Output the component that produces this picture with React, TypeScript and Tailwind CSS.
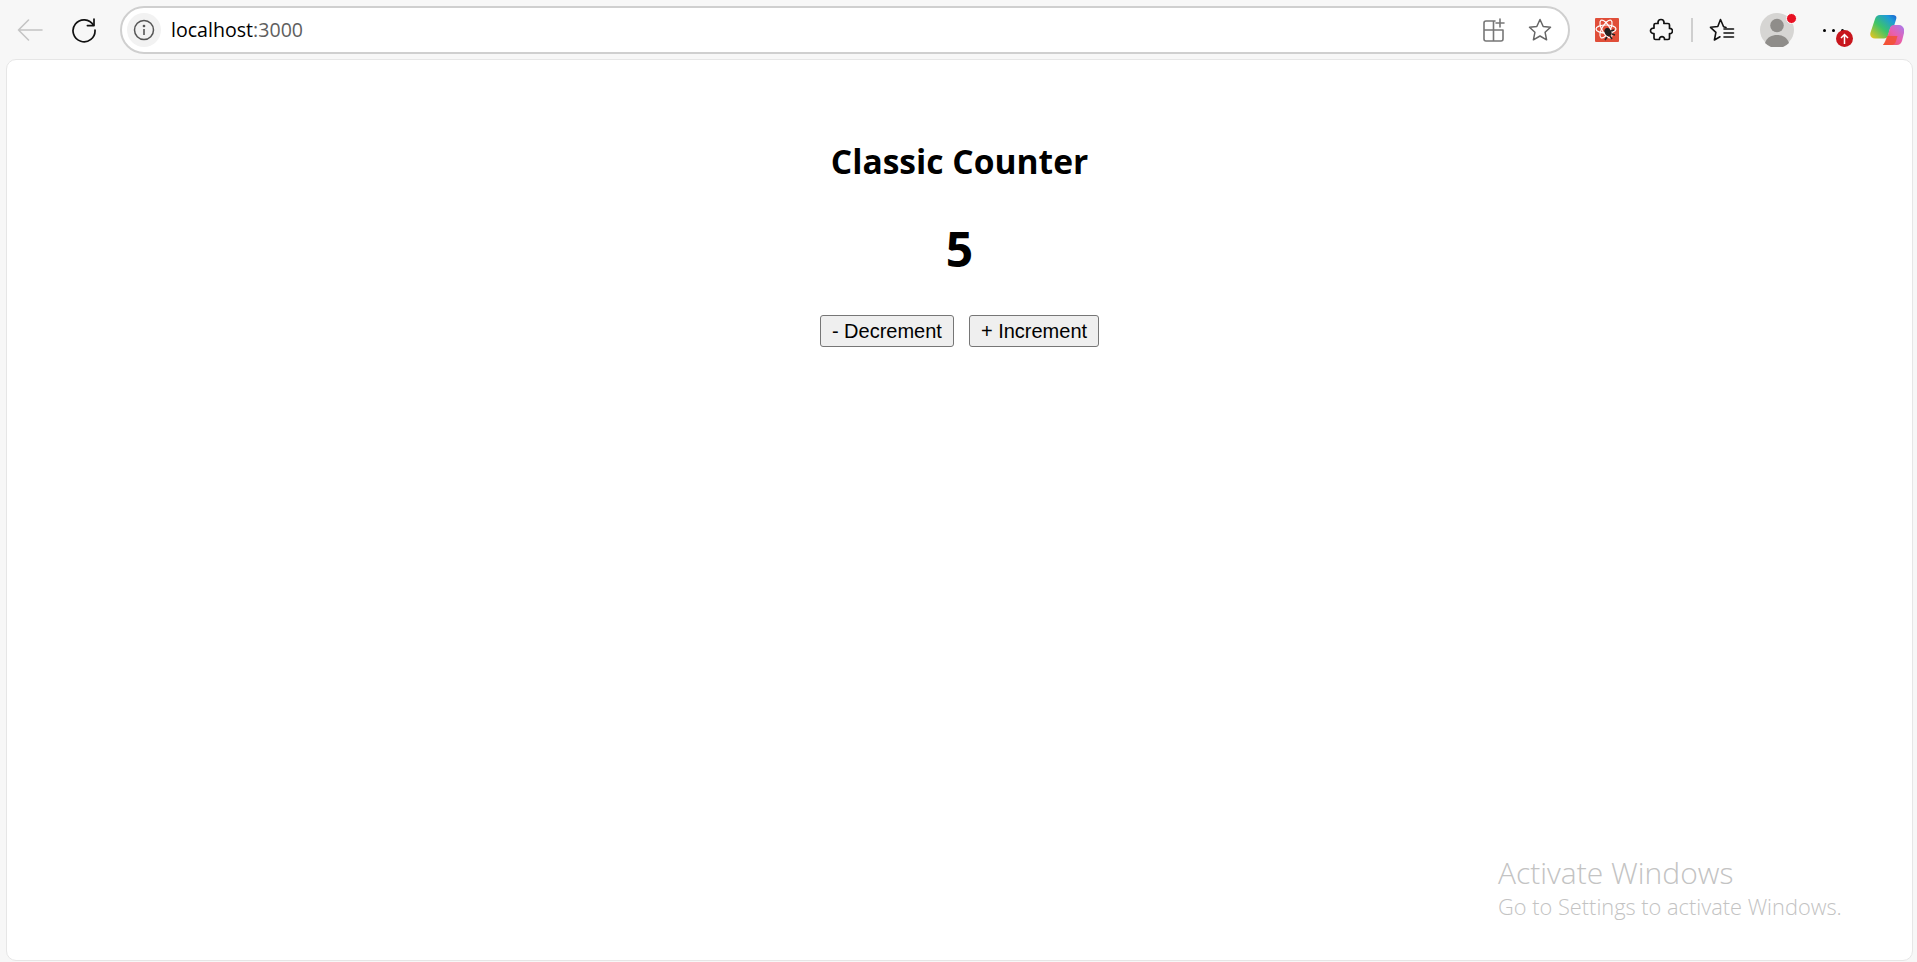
import React from "react";

const Back = () => (
  <svg width="26" height="24" viewBox="0 0 26 24" fill="none" stroke="#c4c4c4" strokeWidth="1.6" strokeLinecap="round" strokeLinejoin="round">
    <path d="M1.5 12H25M11.5 2 1.5 12l10 10" />
  </svg>
);
const Reload = () => (
  <svg width="26" height="26" viewBox="0 0 26 26" fill="none" stroke="#111" strokeWidth="1.7" strokeLinecap="round" strokeLinejoin="round">
    <path d="M22.5 8.2A11 11 0 1 0 24 13" />
    <path d="M23 2v6.6h-6.6" />
  </svg>
);
const Info = () => (
  <svg width="22" height="22" viewBox="0 0 22 22" fill="none" stroke="#555" strokeWidth="1.5">
    <circle cx="11" cy="11" r="9.5" />
    <path d="M11 10v6" strokeWidth="1.6" />
    <circle cx="11" cy="7" r="0.6" fill="#555" />
  </svg>
);
const TabPlus = () => (
  <svg width="24" height="24" viewBox="0 0 24 24" fill="none" stroke="#777" strokeWidth="1.6" strokeLinejoin="round" strokeLinecap="round">
    <path d="M13 3H4a2 2 0 0 0-2 2v16a2 2 0 0 0 2 2h15a2 2 0 0 0 2-2V12H2M11.500 3v20" />
    <path d="M18 1v8M14 5h8" />
  </svg>
);
const Star = () => (
  <svg width="26" height="26" viewBox="0 0 26 26" fill="none" stroke="#666" strokeWidth="1.5" strokeLinejoin="round">
    <path d="M13 2.500l3.200 7 7.300.8-5.400 5 1.500 7.500L13 19l-6.600 3.800 1.500-7.500-5.400-5 7.300-.8z" />
  </svg>
);
const ReactBug = () => (
  <svg width="24" height="24" viewBox="0 0 24 24" className="rounded-[1px]">
    <rect width="24" height="24" fill="#e04e39" />
    <g fill="none" stroke="#fff" strokeWidth="1.200">
      <ellipse cx="11" cy="11" rx="10" ry="4" />
      <ellipse cx="11" cy="11" rx="10" ry="4" transform="rotate(60 11 11)" />
      <ellipse cx="11" cy="11" rx="10" ry="4" transform="rotate(120 11 11)" />
    </g>
    <g stroke="#222" strokeWidth="1.500" fill="#222">
      <ellipse cx="13" cy="14" rx="2.500" ry="3.500" transform="rotate(-30 13 14)" />
      <path d="M12 19l-2 3M15 18l2 3M16 13l3-1M17 16l3 1" fill="none" />
    </g>
  </svg>
);
const Puzzle = () => (
  <svg width="24" height="24" viewBox="0 0 24 24" fill="none" stroke="#111" strokeWidth="1.700" strokeLinejoin="round">
    <path d="M9 4.500C9 2.800 10.300 1.500 12 1.500s3 1.300 3 3c0 .6-.1 1-.1 1H19a1.500 1.500 0 0 1 1.500 1.500v3.500c1.800-.3 3 1.100 3 2.500s-1.200 3-3 2.700V20a1.500 1.500 0 0 1-1.500 1.500h-3.500c.2-1.800-1.200-2.800-2.500-2.800s-2.800 1-2.500 2.800H6.500A1.500 1.500 0 0 1 5 20v-4.500c-1.800.3-3.500-1-3.500-2.700s1.700-3 3.500-2.700V7a1.500 1.500 0 0 1 1.500-1.500h2.600S9 5 9 4.500z" />
  </svg>
);
const StarList = () => (
  <svg width="26" height="26" viewBox="0 0 26 26" fill="none" stroke="#111" strokeWidth="1.600" strokeLinejoin="round" strokeLinecap="round">
    <path d="M17 10.500 14.600 9.800 11.500 2.500 8.800 9.500 1.500 10.300l5.400 5L5.400 23l5.600-3.200" />
    <path d="M15 12h9.500M15 16h9.500M15 20h9.500" />
  </svg>
);
const Avatar = () => (
  <div className="relative h-[34px] w-[34px]">
    <svg width="34" height="34" viewBox="0 0 34 34">
      <circle cx="17" cy="17" r="17" fill="#d6d5d3" />
      <circle cx="17" cy="12.500" r="6.800" fill="#8f8d8a" />
      <path d="M5 30c2-6 7-8 12-8s10 2 12 8a17 17 0 0 1-24 0z" fill="#8f8d8a" />
    </svg>
    <span className="absolute right-[-3px] top-0 box-content h-[9px] w-[9px] rounded-full border border-white bg-[#e81123]" />
  </div>
);
const Dots = () => (
  <div className="relative flex h-[34px] w-[36px] items-center gap-[6px] pl-[5px]">
    <span className="h-[3px] w-[3px] rounded-full bg-black" />
    <span className="h-[3px] w-[3px] rounded-full bg-black" />
    <span className="h-[3px] w-[3px] rounded-full bg-black" />
    <span className="absolute left-[18px] top-[17px] flex h-[17px] w-[17px] items-center justify-center rounded-full bg-[#c8161d]">
      <svg width="9" height="11" viewBox="0 0 9 11" fill="none" stroke="#fff" strokeWidth="1.500">
        <path d="M4.500 11V1.500M1 5l3.500-3.500L8 5" />
      </svg>
    </span>
  </div>
);
const Copilot = () => (
  <svg width="34" height="32" viewBox="0 0 34 32">
    <defs>
      <linearGradient id="cpa" x1="0" y1="1" x2="1" y2="0">
        <stop offset="0" stopColor="#f5c518" />
        <stop offset="0.45" stopColor="#3cc46a" />
        <stop offset="0.8" stopColor="#1e9bd8" />
        <stop offset="1" stopColor="#1b5fd0" />
      </linearGradient>
      <linearGradient id="cpb" x1="0" y1="1" x2="1" y2="0">
        <stop offset="0" stopColor="#f5563a" />
        <stop offset="0.55" stopColor="#e85fb0" />
        <stop offset="1" stopColor="#a67cf0" />
      </linearGradient>
    </defs>
    <path d="M10 1h13c2.500 0 4 1.500 3.200 4L24 12c-2 0-3.500 1-4 3l-2 6.500c-.6 2-2 3-4 3H5c-3.500 0-5.500-2.500-4.500-6L5 5c.8-2.500 2.500-4 5-4z" fill="url(#cpa)" />
    <path d="M13 31h14c2.500 0 4-1.500 5-4l2-8c1-4-1-8-5-8h-5c-2 0-3.500 1-4 3l-3 10c-.7 2.500-2 5-4 7z" fill="url(#cpb)" />
    <path d="M17 22c-.7 2.500-2 6-4 9h8c3 0 4.500-2 5-4l1.500-5z" fill="#f2502f" opacity="0.8" />
  </svg>
);

export default function App() {
  return (
    <div className="flex h-[962px] w-full flex-col overflow-hidden bg-[#f7f7f7]">
      <header className="flex h-[59px] shrink-0 items-center pt-[1px]">
        <div className="ml-[17px] flex w-[26px] items-center"><Back /></div>
        <div className="ml-[28px] flex w-[26px] items-center"><Reload /></div>
        <div className="ml-[23px] flex h-[48px] w-[1450px] items-center rounded-full border-2 border-[#cfcfcf] bg-white pl-[5px] pr-[15px]">
          <div className="flex h-[34px] w-[34px] items-center justify-center rounded-full bg-[#f2f2f2]"><Info /></div>
          <div className="ml-[10px] flex-1 font-['Open_Sans',sans-serif] text-[19.6px] text-black">
            localhost<span className="text-[#5f5f5f]">:3000</span>
          </div>
          <div className="flex items-center gap-[21px]"><TabPlus /><Star /></div>
        </div>
        <div className="ml-[25px] flex items-center">
          <ReactBug />
          <div className="ml-[30px]"><Puzzle /></div>
          <div className="ml-[18px] h-[24px] w-[2px] bg-[#cfcfcf]" />
          <div className="ml-[16px]"><StarList /></div>
          <div className="ml-[25px]"><Avatar /></div>
          <div className="ml-[24px]"><Dots /></div>
          <div className="ml-[16px]"><Copilot /></div>
        </div>
      </header>
      <main className="relative mb-[1px] ml-[6px] mr-[4px] flex flex-1 flex-col items-center rounded-[10px] border border-[#e6e6e6] bg-white">
        <h1 className="mt-[79px] font-['Open_Sans',sans-serif] text-[33.6px] font-bold leading-[44px] text-black">Classic Counter</h1>
        <div className="mt-[33px] font-['Open_Sans',sans-serif] text-[48px] font-bold leading-[66px] text-black">5</div>
        <div className="mt-[33px] flex gap-[15px]">
          <button className="h-[32px] rounded-[3px] border border-[#767676] bg-[#efefef] px-[11px] font-['Liberation_Sans',sans-serif] text-[20px] leading-none text-black">- Decrement</button>
          <button className="h-[32px] rounded-[3px] border border-[#767676] bg-[#efefef] px-[11px] font-['Liberation_Sans',sans-serif] text-[20px] leading-none text-black">+ Increment</button>
        </div>
        <div className="absolute left-[1491px] top-[794px] font-['Open_Sans',sans-serif] font-light text-[#c3c3c3]">
          <div className="text-[30px] leading-[38px]">Activate Windows</div>
          <div className="text-[21.8px] leading-[30px]">Go to Settings to activate Windows.</div>
        </div>
      </main>
    </div>
  );
}
